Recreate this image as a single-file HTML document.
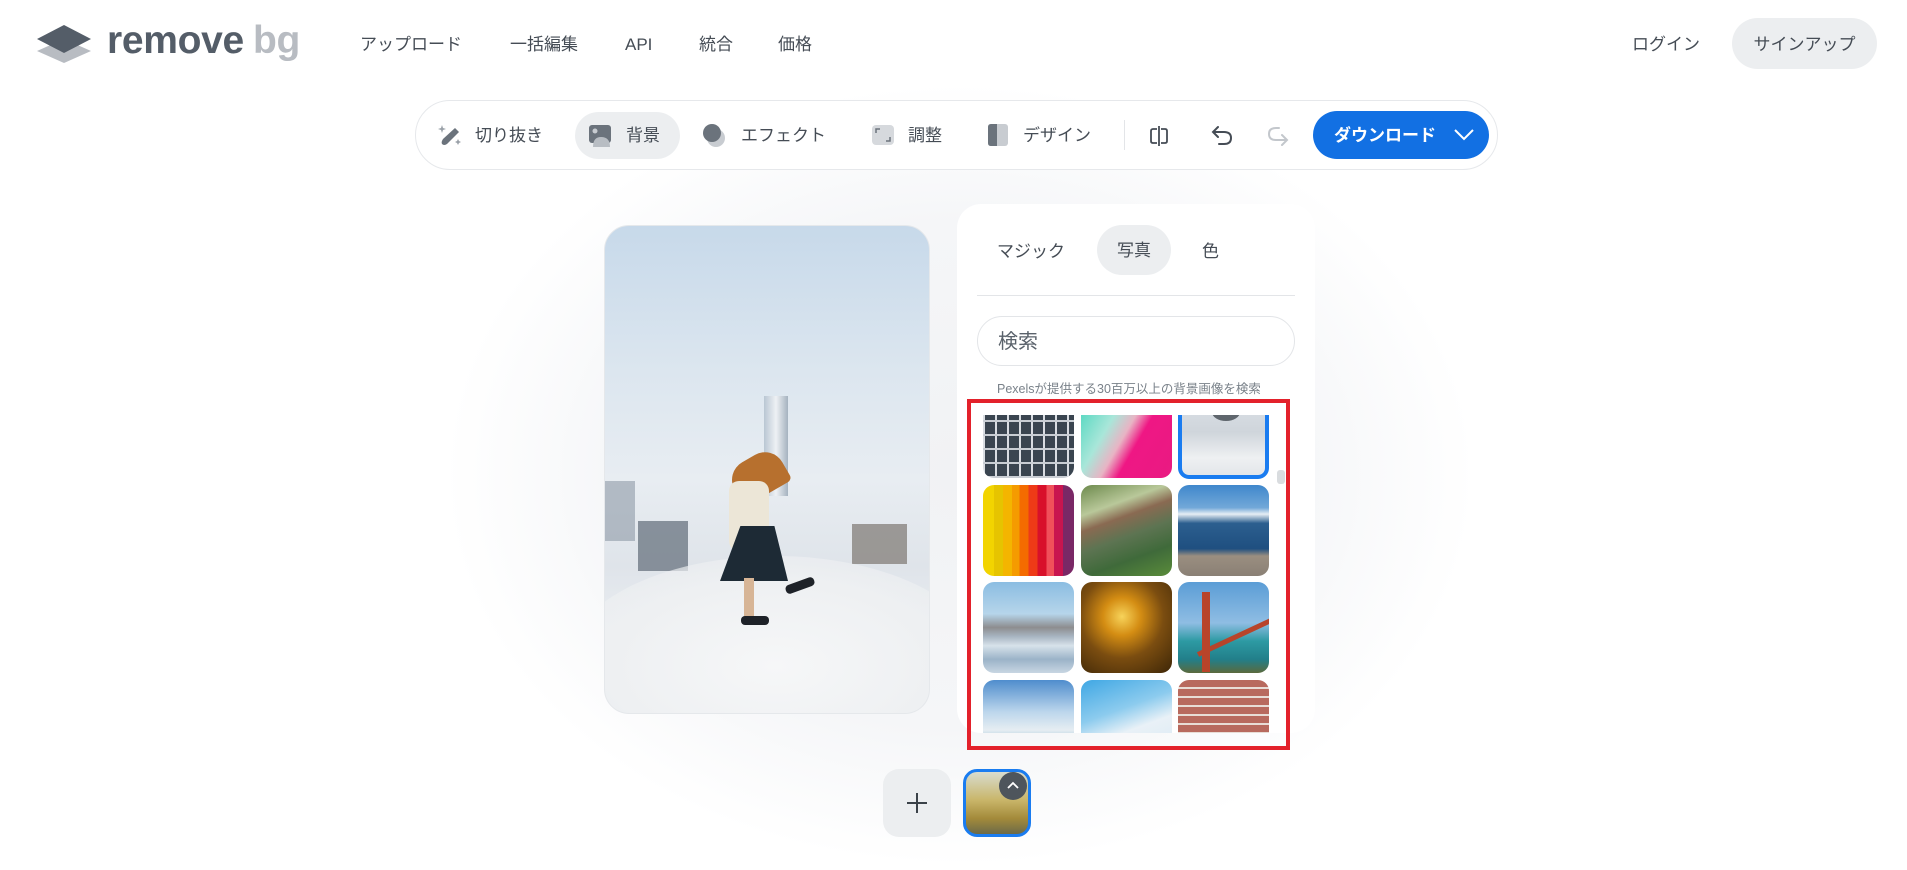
<!DOCTYPE html>
<html><head><meta charset="utf-8">
<style>
*{margin:0;padding:0;box-sizing:border-box}
body{width:1907px;height:867px;overflow:hidden;background:#fff;font-family:"Liberation Sans","Noto Sans CJK JP",sans-serif;color:#454c55;position:relative}
.glow{position:absolute;left:440px;top:80px;width:1040px;height:790px;border-radius:50%;background:radial-gradient(ellipse at center,#f1f2f4 0%,#f5f6f8 45%,rgba(255,255,255,0) 70%)}
.abs{position:absolute}
.nav{font-size:17px;color:#454c55;top:34px;line-height:22px;height:22px}
.tb{left:415px;top:100px;width:1083px;height:70px;background:#fff;border:1px solid #e6e8eb;border-radius:35px}
.tbt{font-size:17px;color:#454c55;top:125px;line-height:22px}
.panel{left:957px;top:204px;width:358px;height:529px;background:#fff;border-radius:24px}
.tile{position:absolute;width:91px;border-radius:11px;overflow:hidden}
</style></head><body>
<div class="glow"></div>

<!-- logo -->
<svg class="abs" style="left:36px;top:25px" width="56" height="38" viewBox="0 0 56 38">
<path d="M28 14 L55 26 L28 38 L1 26Z" fill="#b8bcc2"/>
<path d="M28 0 L55 14 L28 28 L1 14Z" fill="#545d68"/>
</svg>
<div class="abs" style="left:107px;top:20px;font-size:39px;line-height:42px;font-weight:bold;color:#545d68;letter-spacing:-0.3px">remove<span style="color:#b8bcc2;margin-left:9px">bg</span></div>

<div class="abs nav" style="left:360px">アップロード</div>
<div class="abs nav" style="left:510px">一括編集</div>
<div class="abs nav" style="left:625px">API</div>
<div class="abs nav" style="left:699px">統合</div>
<div class="abs nav" style="left:778px">価格</div>
<div class="abs nav" style="left:1632px">ログイン</div>
<div class="abs" style="left:1732px;top:18px;width:145px;height:51px;border-radius:26px;background:#eceef0;font-size:17px;line-height:53px;text-align:center;color:#454c55">サインアップ</div>

<!-- toolbar -->
<div class="abs tb"></div>
<svg class="abs" style="left:437px;top:122px" width="26" height="26" viewBox="0 0 26 26"><path d="M18 6 L22 10 L10 22 Q7 24 5 22 Q4 20 6 17Z" fill="#6b737c"/><path d="M5 3 l1 3 3 1-3 1-1 3-1-3-3-1 3-1z M21 17 l1 2 2 1-2 1-1 2-1-2-2-1 2-1z" fill="#9aa1a8"/></svg>
<div class="abs tbt" style="left:475px">切り抜き</div>
<div class="abs" style="left:575px;top:112px;width:105px;height:47px;border-radius:24px;background:#eceef0"></div>
<svg class="abs" style="left:588px;top:124px" width="26" height="24" viewBox="0 0 26 24"><rect x="1" y="1" width="22" height="18" rx="3" fill="#6b737c"/><circle cx="7" cy="7" r="2.5" fill="#c8ccd1"/><path d="M5 23 Q5 13 13 13 Q22 13 22 23Z" fill="#b8bdc3"/></svg>
<div class="abs tbt" style="left:626px">背景</div>
<svg class="abs" style="left:701px;top:122px" width="26" height="26" viewBox="0 0 26 26"><circle cx="15" cy="16" r="9" fill="#c8ccd1"/><circle cx="11" cy="11" r="9" fill="#6b737c"/></svg>
<div class="abs tbt" style="left:741px">エフェクト</div>
<svg class="abs" style="left:871px;top:124px" width="24" height="22" viewBox="0 0 24 22"><rect x="1" y="1" width="22" height="20" rx="4" fill="#d6d9dd"/><path d="M5 9 V5 H9 M19 13 V17 H15" stroke="#6b737c" stroke-width="1.5" fill="none"/></svg>
<div class="abs tbt" style="left:908px">調整</div>
<svg class="abs" style="left:987px;top:123px" width="22" height="24" viewBox="0 0 22 24"><rect x="1" y="1" width="20" height="22" rx="3" fill="#c8ccd1"/><path d="M4 1 H10 V23 H4 Q1 23 1 20 V4 Q1 1 4 1Z" fill="#6b737c"/></svg>
<div class="abs tbt" style="left:1023px">デザイン</div>
<div class="abs" style="left:1124px;top:120px;width:1px;height:30px;background:#e3e5e8"></div>
<svg class="abs" style="left:1147px;top:124px" width="24" height="24" viewBox="0 0 24 24" fill="none" stroke="#454c55" stroke-width="1.8"><path d="M10 5 H6 Q4 5 4 7 V17 Q4 19 6 19 H10 M14 5 H18 Q20 5 20 7 V17 Q20 19 18 19 H14 M12 2 V22"/></svg>
<svg class="abs" style="left:1209px;top:123px" width="26" height="26" viewBox="0 0 26 26" fill="none" stroke="#454c55" stroke-width="2" stroke-linecap="round"><path d="M9 4 L4 9 L9 14 M4 9 H15 Q22 9 22 15 Q22 21 15 21 H10"/></svg>
<svg class="abs" style="left:1265px;top:123px" width="26" height="26" viewBox="0 0 26 26" fill="none" stroke="#c3c7cc" stroke-width="2" stroke-linecap="round"><path d="M17 12 L22 17 L17 22 M22 17 H11 Q4 17 4 11 Q4 5 11 5 H14"/></svg>
<div class="abs" style="left:1313px;top:111px;width:176px;height:48px;border-radius:24px;background:#1270e3;color:#fff;font-size:17px;font-weight:bold;line-height:50px;padding-left:21px">ダウンロード</div>
<svg class="abs" style="left:1453px;top:127px" width="22" height="16" viewBox="0 0 22 16"><path d="M2 3 L11 12 L20 3" stroke="#fff" stroke-width="2" fill="none"/></svg>

<!-- image card -->
<div class="abs" style="left:604px;top:225px;width:326px;height:489px;border-radius:25px;overflow:hidden;background:linear-gradient(180deg,#c7d9ea 0%,#dce6ef 30%,#e8edf2 52%,#e4e9ee 60%,#dfe4ea 70%,#eceff2 85%,#e4e8ec 100%);border:1px solid #e5e8eb">
  <div class="abs" style="left:0;top:255px;width:30px;height:60px;background:#8d99a6;opacity:.6"></div>
  <div class="abs" style="left:33px;top:295px;width:50px;height:50px;background:#5f6b77;opacity:.7"></div>
  <div class="abs" style="left:247px;top:298px;width:55px;height:40px;background:#7c7670;opacity:.7"></div>
  <div class="abs" style="left:-40px;top:330px;width:420px;height:220px;border-radius:50%;background:radial-gradient(ellipse,#f6f7f8 0%,#eef0f2 55%,rgba(236,239,242,0) 100%)"></div>
  <div class="abs" style="left:159px;top:170px;width:24px;height:100px;background:linear-gradient(90deg,#b9c6d3,#eef1f4,#a5b2bf)"></div>
  <div class="abs" style="left:126px;top:230px;width:55px;height:40px;border-radius:20px 20px 5px 5px;background:#b7702e;transform:rotate(-30deg)"></div>
  <div class="abs" style="left:124px;top:255px;width:40px;height:70px;border-radius:10px;background:#ece6d7"></div>
  <div class="abs" style="left:115px;top:300px;width:68px;height:55px;background:#1d2a35;clip-path:polygon(30% 0,80% 0,100% 100%,0 100%)"></div>
  <div class="abs" style="left:139px;top:352px;width:10px;height:40px;background:#d7b596"></div>
  <div class="abs" style="left:136px;top:390px;width:28px;height:9px;border-radius:4px;background:#1e2228"></div>
  <div class="abs" style="left:180px;top:355px;width:30px;height:9px;border-radius:4px;background:#1e2228;transform:rotate(-20deg)"></div>
</div>

<!-- panel -->
<div class="abs panel"></div>
<div class="abs" style="left:997px;top:241px;font-size:17px;line-height:22px;color:#454c55">マジック</div>
<div class="abs" style="left:1097px;top:225px;width:74px;height:50px;border-radius:25px;background:#eceef0;font-size:17px;line-height:52px;text-align:center">写真</div>
<div class="abs" style="left:1202px;top:241px;font-size:17px;line-height:22px">色</div>
<div class="abs" style="left:977px;top:295px;width:318px;height:1px;background:#e3e5e8"></div>
<div class="abs" style="left:977px;top:316px;width:318px;height:50px;border-radius:25px;border:1px solid #e3e5e8;font-size:20px;line-height:50px;padding-left:20px;color:#5a626b">検索</div>
<div class="abs" style="left:997px;top:378px;font-size:12.5px;color:#7a828a">Pexelsが提供する30百万以上の背景画像を検索</div>

<!-- grid -->
<div class="abs" style="left:967px;top:415px;width:320px;height:318px;overflow:hidden">
  <div class="tile" style="left:16px;top:-30px;height:93px;background:repeating-linear-gradient(0deg,#c9ced4 0 2px,transparent 2px 14px),repeating-linear-gradient(90deg,#d9dde2 0 2px,#3a4550 2px 12px)"></div>
  <div class="tile" style="left:114px;top:-30px;height:93px;background:linear-gradient(120deg,#37d3b8 0%,#a9e6d9 35%,#e8b4c4 50%,#ef1784 62%,#e91a82 100%)"></div>
  <div class="tile" style="left:211px;top:-30px;height:94px;border:4px solid #1a7cf0;background:linear-gradient(180deg,#dfe4ea 0%,#cfd5db 50%,#eef0f2 80%,#e3e6ea 100%)"></div>
  <div class="abs" style="left:245px;top:-12px;width:28px;height:18px;border-radius:50%;background:#5f666d"></div>
  <div class="abs" style="left:310px;top:55px;width:8px;height:14px;border-radius:3px;background:#d9dcdf"></div>

  <div class="tile" style="left:16px;top:70px;height:91px;background:linear-gradient(90deg,#f2d400 0 12%,#e6c400 12% 22%,#f4b500 22% 32%,#f59b00 32% 40%,#f46b00 40% 50%,#ee3a17 50% 60%,#d8102a 60% 70%,#f0505a 70% 78%,#c8154f 78% 88%,#7a2866 88% 100%)"></div>
  <div class="tile" style="left:114px;top:70px;height:91px;background:linear-gradient(160deg,#6d8a4d 0%,#b9c89a 25%,#8a6a52 38%,#5d7452 55%,#3f6a3a 75%,#5a8c3a 100%)"></div>
  <div class="tile" style="left:211px;top:70px;height:91px;background:linear-gradient(180deg,#3f87cc 0%,#72a8d8 25%,#e6eef4 32%,#2c5f8f 42%,#1f4f80 70%,#9a8e80 78%,#8a8075 100%)"></div>

  <div class="tile" style="left:16px;top:167px;height:91px;background:linear-gradient(180deg,#8bbde2 0%,#b6d5ea 35%,#8d8d8f 50%,#a8b5c2 60%,#d7e2ea 70%,#9bb3c8 85%,#c8d6e2 100%)"></div>
  <div class="tile" style="left:114px;top:167px;height:91px;background:radial-gradient(circle at 45% 38%,#f7d35a 0%,#d48d13 25%,#7b4d10 55%,#3d2607 100%)"></div>
  <div class="tile" style="left:211px;top:167px;height:91px;background:linear-gradient(180deg,#5b9dd6 0%,#8fbde3 45%,#2d9aa3 65%,#227f8a 85%,#5b6a3d 100%)">
    <div class="abs" style="left:24px;top:10px;width:8px;height:80px;background:#b8442a"></div>
    <div class="abs" style="left:20px;top:70px;width:80px;height:5px;background:#b8442a;transform:rotate(-25deg);transform-origin:left"></div>
  </div>

  <div class="tile" style="left:16px;top:265px;height:91px;background:linear-gradient(180deg,#4f8dcd 0%,#bcd6ec 35%,#e6edf2 55%,#6fa8c9 75%)"></div>
  <div class="tile" style="left:114px;top:265px;height:91px;background:linear-gradient(160deg,#3fa7e4 0%,#8ccbee 35%,#e9f1f7 55%,#d3e6f2 100%)"></div>
  <div class="tile" style="left:211px;top:265px;height:91px;background:repeating-linear-gradient(180deg,#b86a5e 0 7px,#e8ddd6 7px 9px),#c07b6e"></div>
</div>
<div class="abs" style="left:967px;top:399px;width:323px;height:351px;border:4px solid #e3212b"></div>

<!-- bottom -->
<div class="abs" style="left:883px;top:769px;width:68px;height:68px;border-radius:16px;background:#eceef0"></div>
<svg class="abs" style="left:903px;top:789px" width="28" height="28" viewBox="0 0 28 28"><path d="M14 4 V24 M4 14 H24" stroke="#3b4249" stroke-width="2"/></svg>
<div class="abs" style="left:963px;top:769px;width:68px;height:68px;border-radius:14px;border:3px solid #1a7cf0;overflow:hidden;background:linear-gradient(180deg,#d8dccf 0%,#c9b66a 45%,#a38a3a 75%,#6c6a48 100%)"></div>
<div class="abs" style="left:999px;top:772px;width:28px;height:28px;border-radius:50%;background:#4e555c"></div>
<svg class="abs" style="left:1005px;top:778px" width="16" height="14" viewBox="0 0 16 14"><path d="M3 10 L8 5 L13 10" stroke="#fff" stroke-width="1.8" fill="none"/></svg>
</body></html>
